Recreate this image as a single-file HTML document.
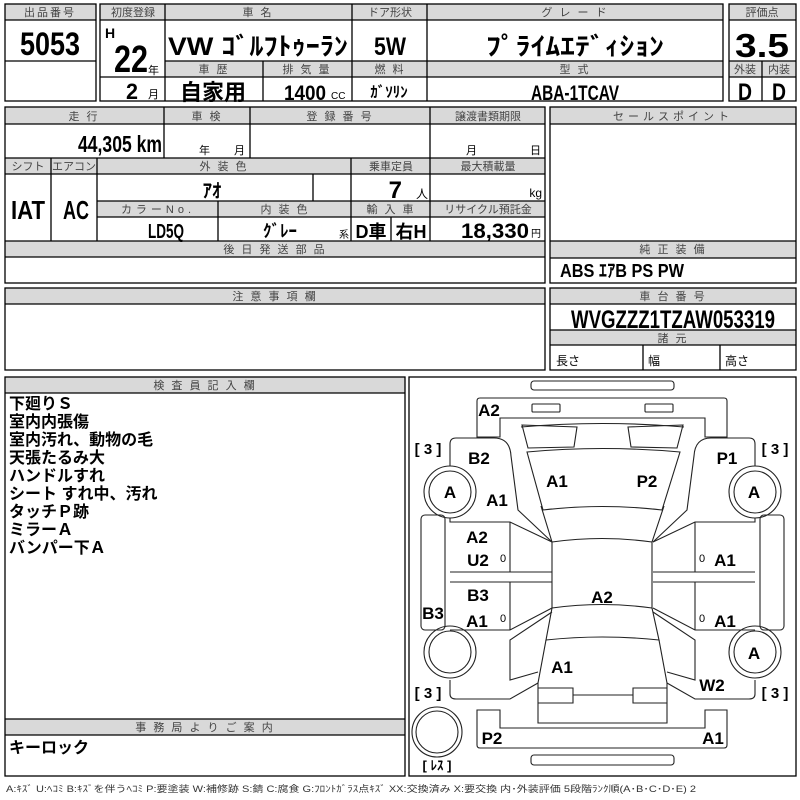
<!DOCTYPE html>
<html><head><meta charset="utf-8"><style>
html,body{margin:0;padding:0;background:#fff;width:800px;height:800px;overflow:hidden}
svg{display:block}
text{font-family:"Liberation Sans","Noto Sans CJK JP",sans-serif}
.h{font-size:11px;fill:#444;text-anchor:middle;letter-spacing:2px}
.b{font-weight:bold;fill:#000}
.d{font-weight:bold;font-size:17px;fill:#000;text-anchor:middle}
</style></head><body>
<svg width="800" height="800" viewBox="0 0 800 800" xmlns="http://www.w3.org/2000/svg">
<g fill="#d9d9d9">
<rect x="5" y="4" width="91" height="16"/><rect x="100" y="4" width="623" height="16"/>
<rect x="165" y="61" width="558" height="16"/><rect x="729" y="4" width="67" height="16"/><rect x="729" y="61" width="67" height="16"/>
<rect x="5" y="107" width="540" height="17"/><rect x="5" y="158" width="540" height="16"/><rect x="97" y="201" width="448" height="16"/><rect x="5" y="241" width="540" height="16"/>
<rect x="550" y="107" width="246" height="17"/><rect x="550" y="241" width="246" height="17"/>
<rect x="5" y="288" width="540" height="16"/><rect x="550" y="288" width="246" height="16"/><rect x="550" y="330" width="246" height="15"/>
<rect x="5" y="377" width="400" height="16"/><rect x="5" y="719" width="400" height="16"/>
</g>
<g fill="none" stroke="#000" stroke-width="1.3">
<rect x="5" y="4" width="91" height="97"/><rect x="100" y="4" width="623" height="97"/><rect x="729" y="4" width="67" height="97"/>
<rect x="5" y="107" width="540" height="176"/><rect x="550" y="107" width="246" height="176"/>
<rect x="5" y="288" width="540" height="82"/><rect x="550" y="288" width="246" height="82"/>
<rect x="5" y="377" width="400" height="399"/><rect x="409" y="377" width="387" height="399"/>
<path d="M5 20H96M5 61H96M100 20H723M165 4V101M352 4V101M427 4V101M165 61H723M100 77H723M263 61V101
M729 20H796M729 61H796M729 77H796M762 61V101
M5 124H545M5 158H545M5 174H545M5 241H545M5 257H545M164 107V158M250 107V158M430 107V241M51 158V241M97 158V241M351 158V241
M97 201H545M97 217H545M313 174V201M218 201V241M391 217V241
M550 124H796M550 241H796M550 258H796
M5 304H545M550 304H796M550 330H796M550 345H796M643 345V370M720 345V370
M5 393H405M5 719H405M5 735H405"/>
</g>
<text class="h" x="50" y="16">出品番号</text>
<text class="h" x="133" y="16" style="letter-spacing:0">初度登録</text>
<text class="h" x="258" y="16">車 名</text>
<text class="h" x="390" y="16" style="letter-spacing:0">ドア形状</text>
<text class="h" x="575" y="16">グ レ ー ド</text>
<text class="h" x="762" y="16" style="letter-spacing:0">評価点</text>
<text class="h" x="214" y="73">車 歴</text>
<text class="h" x="307" y="73">排 気 量</text>
<text class="h" x="390" y="73">燃 料</text>
<text class="h" x="575" y="73">型 式</text>
<text class="h" x="745" y="73" style="letter-spacing:0">外装</text>
<text class="h" x="779" y="73" style="letter-spacing:0">内装</text>
<text class="h" x="84" y="120">走 行</text>
<text class="h" x="207" y="120">車 検</text>
<text class="h" x="340" y="120">登 録 番 号</text>
<text class="h" x="488" y="120" style="letter-spacing:0">譲渡書類期限</text>
<text class="h" x="28" y="170" style="letter-spacing:0">シフト</text>
<text class="h" x="74" y="170" style="letter-spacing:0">エアコン</text>
<text class="h" x="224" y="170">外 装 色</text>
<text class="h" x="391" y="170" style="letter-spacing:0">乗車定員</text>
<text class="h" x="488" y="170" style="letter-spacing:0">最大積載量</text>
<text class="h" x="158" y="213" style="letter-spacing:4px">カラーNo.</text>
<text class="h" x="285" y="213">内 装 色</text>
<text class="h" x="391" y="213">輸 入 車</text>
<text class="h" x="488" y="213" style="letter-spacing:0">リサイクル預託金</text>
<text class="h" x="275" y="253">後 日 発 送 部 品</text>
<text class="h" x="673" y="120" style="letter-spacing:4px">セールスポイント</text>
<text class="h" x="673" y="253">純 正 装 備</text>
<text class="h" x="275" y="300">注 意 事 項 欄</text>
<text class="h" x="673" y="300">車 台 番 号</text>
<text class="h" x="673" y="342">諸 元</text>
<text class="h" x="205" y="389">検 査 員 記 入 欄</text>
<text class="h" x="205" y="731">事 務 局 よ り ご 案 内</text>
<text class="b" x="20" y="55" font-size="32" textLength="60" lengthAdjust="spacingAndGlyphs">5053</text>
<text class="b" x="105" y="38" font-size="14">H</text>
<text class="b" x="114" y="72" font-size="38" textLength="34" lengthAdjust="spacingAndGlyphs">22</text>
<text x="148" y="74" font-size="11">年</text>
<text class="b" x="126" y="99" font-size="22" textLength="12" lengthAdjust="spacingAndGlyphs">2</text>
<text x="148" y="98" font-size="11">月</text>
<text class="b" x="258" y="55" font-size="25" text-anchor="middle" textLength="180" lengthAdjust="spacingAndGlyphs">VW ｺﾞﾙﾌﾄｩｰﾗﾝ</text>
<text class="b" x="390" y="55" font-size="25" text-anchor="middle" textLength="32" lengthAdjust="spacingAndGlyphs">5W</text>
<text class="b" x="575" y="55" font-size="25" text-anchor="middle" textLength="178" lengthAdjust="spacingAndGlyphs">ﾌﾟﾗｲﾑｴﾃﾞｨｼｮﾝ</text>
<text class="b" x="762" y="57" font-size="33" text-anchor="middle" textLength="54" lengthAdjust="spacingAndGlyphs">3.5</text>
<text class="b" x="213" y="100" font-size="22" text-anchor="middle">自家用</text>
<text class="b" x="284" y="100" font-size="21" textLength="42" lengthAdjust="spacingAndGlyphs">1400</text>
<text x="331" y="99" font-size="10">CC</text>
<text class="b" x="389" y="97" font-size="15" text-anchor="middle">ｶﾞｿﾘﾝ</text>
<text class="b" x="575" y="100" font-size="21" text-anchor="middle" textLength="88" lengthAdjust="spacingAndGlyphs">ABA-1TCAV</text>
<text class="b" x="745" y="100" font-size="24" text-anchor="middle" textLength="14" lengthAdjust="spacingAndGlyphs">D</text>
<text class="b" x="779" y="100" font-size="24" text-anchor="middle" textLength="14" lengthAdjust="spacingAndGlyphs">D</text>
<text class="b" x="78" y="152" font-size="23" textLength="84" lengthAdjust="spacingAndGlyphs">44,305 km</text>
<text x="199" y="154" font-size="11">年</text><text x="234" y="154" font-size="11">月</text>
<text x="466" y="154" font-size="11">月</text><text x="530" y="154" font-size="11">日</text>
<text class="b" x="28" y="219" font-size="26" text-anchor="middle" textLength="34" lengthAdjust="spacingAndGlyphs">IAT</text>
<text class="b" x="76" y="219" font-size="26" text-anchor="middle" textLength="26" lengthAdjust="spacingAndGlyphs">AC</text>
<text class="b" x="212" y="197" font-size="19" text-anchor="middle">ｱｵ</text>
<text class="b" x="402" y="198" font-size="24" text-anchor="end">7</text>
<text x="416" y="198" font-size="12">人</text>
<text x="542" y="197" font-size="12" text-anchor="end">kg</text>
<text class="b" x="166" y="238" font-size="20" text-anchor="middle" textLength="36" lengthAdjust="spacingAndGlyphs">LD5Q</text>
<text class="b" x="280" y="237" font-size="17" text-anchor="middle">ｸﾞﾚｰ</text>
<text x="339" y="238" font-size="10">系</text>
<text class="b" x="371" y="238" font-size="18" text-anchor="middle">D車</text>
<text class="b" x="411" y="238" font-size="18" text-anchor="middle">右H</text>
<text class="b" x="529" y="238" font-size="21" text-anchor="end" textLength="68" lengthAdjust="spacingAndGlyphs">18,330</text>
<text x="531" y="237" font-size="10">円</text>
<text class="b" x="560" y="277" font-size="18" textLength="124" lengthAdjust="spacingAndGlyphs">ABS ｴｱB PS PW</text>
<text class="b" x="673" y="328" font-size="25" text-anchor="middle" textLength="204" lengthAdjust="spacingAndGlyphs">WVGZZZ1TZAW053319</text>
<text x="556" y="365" font-size="12">長さ</text><text x="648" y="365" font-size="12">幅</text><text x="725" y="365" font-size="12">高さ</text>
<g class="b" font-size="16">
<text x="9" y="409">下廻りＳ</text><text x="9" y="427">室内内張傷</text><text x="9" y="445">室内汚れ、動物の毛</text>
<text x="9" y="463">天張たるみ大</text><text x="9" y="481">ハンドルすれ</text><text x="9" y="499">シート すれ中、汚れ</text>
<text x="9" y="517">タッチＰ跡</text><text x="9" y="535">ミラーＡ</text><text x="9" y="553">バンパー下Ａ</text>
<text x="9" y="753">キーロック</text>
</g>
<text x="6" y="792" font-size="9" fill="#333" textLength="690" lengthAdjust="spacingAndGlyphs">A:ｷｽﾞ U:ﾍｺﾐ B:ｷｽﾞを伴うﾍｺﾐ P:要塗装 W:補修跡 S:錆 C:腐食 G:ﾌﾛﾝﾄｶﾞﾗｽ点ｷｽﾞ XX:交換済み X:要交換  内･外装評価  5段階ﾗﾝｸ順(A･B･C･D･E) 2</text>
<g fill="none" stroke="#222" stroke-width="1.1">
<rect x="531" y="381" width="143" height="9" rx="3"/>
<path d="M477 437V401Q477 398 480 398H724Q727 398 727 401V437H705V418H500V437Z"/>
<rect x="532" y="404" width="28" height="8" rx="1"/><rect x="645" y="404" width="28" height="8" rx="1"/>
<path d="M477 710H500V728H705V710H727V745Q727 748 724 748H480Q477 748 477 745Z"/>
<rect x="531" y="755" width="143" height="10" rx="3"/>
<circle cx="437" cy="732" r="25"/><circle cx="437" cy="732" r="21"/>
<path d="M521 427Q602 420 684 427"/>
<path d="M527 452Q602 445 680 452L662 510Q602 503 543 510Z"/>
<path d="M541 506L552 542M664 506L652 542"/>
<path d="M552 542Q602 535 652 542L652 608Q602 601 552 608Z"/>
<path d="M552 608L546 640Q602 634 659 640L652 608"/>
<path d="M546 640L538 683V723H667V683L659 640"/>
<path d="M538 688H573V703H538M667 688H633V703H667M573 695H633"/>
<g id="side">
<path d="M522 425L577 427L574 447L528 448Z"/>
<path d="M450 466V444Q450 438 456 438H494Q510 438 511 456L518 510L552 542"/>
<path d="M450 518V522H510L552 542M450 572H552M450 582H552M450 630H510L552 608"/>
<path d="M510 522V572M510 582V630"/>
<path d="M552 612L510 640V680L538 672"/>
<path d="M450 680V694Q450 699 456 699H510L538 683"/>
<rect x="421" y="515" width="24" height="115" rx="4"/>
<circle cx="450" cy="492" r="26"/><circle cx="450" cy="492" r="21"/>
<circle cx="450" cy="652" r="26"/><circle cx="450" cy="652" r="21"/>
</g>
<use href="#side" transform="translate(1205 0) scale(-1 1)"/>
</g>
<g class="d">
<text x="489" y="416">A2</text><text x="479" y="464">B2</text><text x="497" y="506">A1</text><text x="450" y="498">A</text>
<text x="557" y="487">A1</text><text x="647" y="487">P2</text><text x="727" y="464">P1</text><text x="754" y="498">A</text>
<text x="477" y="543">A2</text><text x="478" y="566">U2</text><text x="725" y="566">A1</text>
<text x="478" y="601">B3</text><text x="477" y="627">A1</text><text x="433" y="619">B3</text><text x="602" y="603">A2</text>
<text x="725" y="627">A1</text><text x="754" y="659">A</text><text x="562" y="673">A1</text><text x="712" y="691">W2</text>
<text x="492" y="744">P2</text><text x="713" y="744">A1</text>
</g>
<g font-size="11" fill="#000" text-anchor="middle">
<text x="503" y="562">0</text><text x="702" y="562">0</text><text x="503" y="622">0</text><text x="702" y="622">0</text>
</g>
<g font-size="15" fill="#000" text-anchor="middle" font-weight="bold">
<text x="428" y="454" xml:space="preserve">[ 3 ]</text><text x="775" y="454" xml:space="preserve">[ 3 ]</text>
<text x="428" y="698" xml:space="preserve">[ 3 ]</text><text x="775" y="698" xml:space="preserve">[ 3 ]</text>
<text x="437" y="770" font-size="13">[ ﾚｽ ]</text>
</g>
</svg>
</body></html>
